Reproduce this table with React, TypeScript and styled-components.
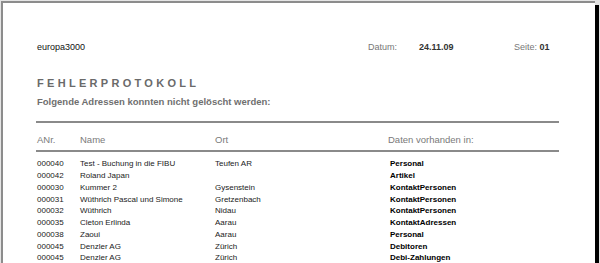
import React from 'react';
import styled, { createGlobalStyle } from 'styled-components';

interface Entry {
  nr: string;
  name: string;
  ort: string;
  daten: string;
}

const entries: Entry[] = [
  { nr: '000040', name: 'Test - Buchung in die FIBU', ort: 'Teufen AR', daten: 'Personal' },
  { nr: '000042', name: 'Roland Japan', ort: '', daten: 'Artikel' },
  { nr: '000030', name: 'Kummer 2', ort: 'Gysenstein', daten: 'KontaktPersonen' },
  { nr: '000031', name: 'Wüthrich Pascal und Simone', ort: 'Gretzenbach', daten: 'KontaktPersonen' },
  { nr: '000032', name: 'Wüthrich', ort: 'Nidau', daten: 'KontaktPersonen' },
  { nr: '000035', name: 'Cleton Erlinda', ort: 'Aarau', daten: 'KontaktAdressen' },
  { nr: '000038', name: 'Zaoui', ort: 'Aarau', daten: 'Personal' },
  { nr: '000045', name: 'Denzler AG', ort: 'Zürich', daten: 'Debitoren' },
  { nr: '000045', name: 'Denzler AG', ort: 'Zürich', daten: 'Debi-Zahlungen' },
];

const GlobalStyle = createGlobalStyle`
  html, body {
    margin: 0;
    padding: 0;
    background: #e4e4e4;
    font-family: 'Liberation Sans', Arial, sans-serif;
    overflow: hidden;
  }
`;

const Viewport = styled.div`
  width: 600px;
  height: 263px;
  padding: 1px 0 0 1px;
  box-sizing: border-box;
  overflow: hidden;
`;

const Page = styled.div`
  width: 594px;
  height: 280px;
  box-sizing: border-box;
  background: #fff;
  border-top: 2px solid #8c8c8c;
  border-left: 2px solid #8c8c8c;
  box-shadow: 4px 4px 0 #000;
  padding: 38px 0 0 34px;
`;

const HeaderRow = styled.div`
  display: grid;
  grid-template-columns: 331px 51px 95px auto;
  width: 523px;
  font-size: 9px;
  line-height: 12px;
  color: #111;
`;

const Muted = styled.span`
  color: #777;
`;

const Strong = styled.span`
  font-weight: bold;
  color: #333;
`;

const Title = styled.h1`
  margin: 23px 0 0;
  font-size: 11px;
  line-height: 14px;
  font-weight: bold;
  letter-spacing: 3.3px;
  color: #6a6a6a;
`;

const Subtitle = styled.h2`
  margin: 6px 0 0;
  font-size: 9.5px;
  line-height: 12px;
  font-weight: bold;
  color: #6f6f6f;
`;

const Rule = styled.div<{ $top: number }>`
  margin: ${(p) => p.$top}px 0 0 -1px;
  width: 523px;
  height: 2px;
  background: #8a8a8a;
`;

const Row = styled.div<{ $head?: boolean }>`
  display: grid;
  grid-template-columns: 43px 135px 173px auto;
  font-size: ${(p) => (p.$head ? '9.5px' : '8px')};
  line-height: ${(p) => (p.$head ? '12px' : '11.75px')};
  color: ${(p) => (p.$head ? '#7a7a7a' : '#222')};
  white-space: nowrap;
`;

const HeadRow = styled(Row)`
  margin-top: 11px;
`;

const Body = styled.div`
  margin-top: 6.4px;
`;

const DataCell = styled.span`
  font-weight: bold;
  color: #000;
  padding-left: 2px;
`;

export default function App() {
  return (
    <Viewport>
      <GlobalStyle />
      <Page>
        <HeaderRow>
          <span>europa3000</span>
          <Muted>Datum:</Muted>
          <Strong>24.11.09</Strong>
          <span>
            <Muted>Seite: </Muted>
            <Strong>01</Strong>
          </span>
        </HeaderRow>
        <Title>FEHLERPROTOKOLL</Title>
        <Subtitle>Folgende Adressen konnten nicht gelöscht werden:</Subtitle>
        <Rule $top={13} />
        <HeadRow $head>
          <span>ANr.</span>
          <span>Name</span>
          <span>Ort</span>
          <span>Daten vorhanden in:</span>
        </HeadRow>
        <Rule $top={4} />
        <Body>
          {entries.map((e, i) => (
            <Row key={i}>
              <span>{e.nr}</span>
              <span>{e.name}</span>
              <span>{e.ort}</span>
              <DataCell>{e.daten}</DataCell>
            </Row>
          ))}
        </Body>
      </Page>
    </Viewport>
  );
}
